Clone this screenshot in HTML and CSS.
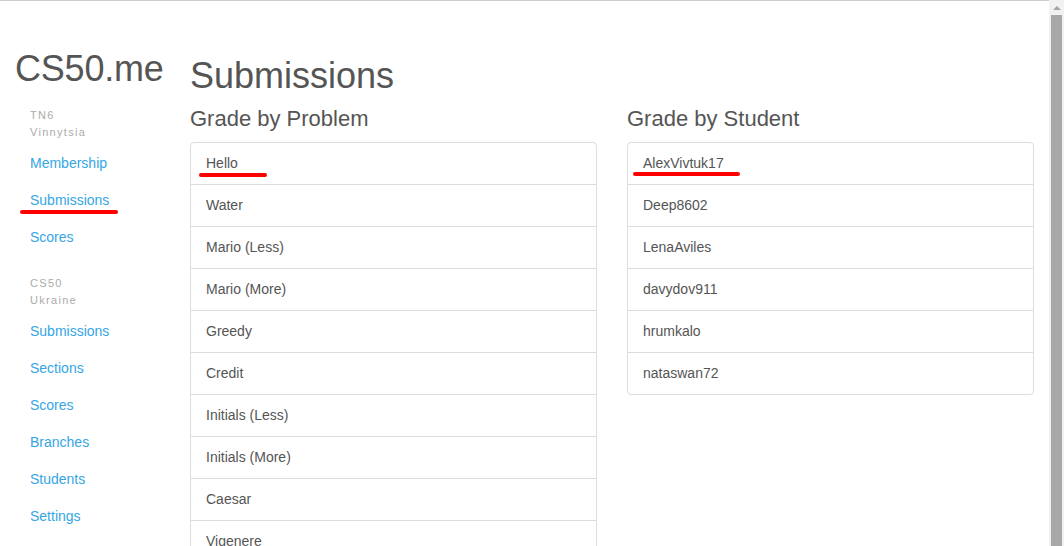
FILE: index.html
```html
<!DOCTYPE html>
<html lang="en">
<head>
<meta charset="utf-8">
<title>CS50.me - Submissions</title>
<link rel="stylesheet" href="styles.css">
</head>
<body>
<div class="window">
  <div class="page">
    <aside class="sidebar">
      <div class="brand">CS50.me</div>
      <div class="group">
        <div class="group-title">TN6<br>Vinnytsia</div>
        <nav class="nav">
          <a class="nav-link" href="#">Membership</a>
          <a class="nav-link marked" href="#">Submissions</a>
          <a class="nav-link" href="#">Scores</a>
        </nav>
      </div>
      <div class="group">
        <div class="group-title">CS50<br>Ukraine</div>
        <nav class="nav">
          <a class="nav-link" href="#">Submissions</a>
          <a class="nav-link" href="#">Sections</a>
          <a class="nav-link" href="#">Scores</a>
          <a class="nav-link" href="#">Branches</a>
          <a class="nav-link" href="#">Students</a>
          <a class="nav-link" href="#">Settings</a>
        </nav>
      </div>
    </aside>
    <main class="main">
      <h1 class="title">Submissions</h1>
      <div class="columns">
        <section class="col">
          <h3 class="subtitle">Grade by Problem</h3>
          <ul class="list">
            <li class="item mark-hello">Hello</li>
            <li class="item">Water</li>
            <li class="item">Mario (Less)</li>
            <li class="item">Mario (More)</li>
            <li class="item">Greedy</li>
            <li class="item">Credit</li>
            <li class="item">Initials (Less)</li>
            <li class="item">Initials (More)</li>
            <li class="item">Caesar</li>
            <li class="item">Vigenere</li>
          </ul>
        </section>
        <section class="col">
          <h3 class="subtitle">Grade by Student</h3>
          <ul class="list">
            <li class="item mark-alex">AlexVivtuk17</li>
            <li class="item">Deep8602</li>
            <li class="item">LenaAviles</li>
            <li class="item">davydov911</li>
            <li class="item">hrumkalo</li>
            <li class="item">nataswan72</li>
          </ul>
        </section>
      </div>
    </main>
  </div>
  <div class="scrollbar">
    <div class="scroll-arrow"></div>
    <div class="scroll-thumb"></div>
  </div>
</div>
</body>
</html>
```

FILE: styles.css
```css
* { box-sizing: border-box; }

html, body {
  margin: 0;
  padding: 0;
  background: #fff;
}

body {
  font-family: "Liberation Sans", Arial, Helvetica, sans-serif;
  font-size: 14px;
  line-height: 20px;
  color: #555;
}

.window {
  display: flex;
  width: 1064px;
  height: 546px;
  overflow: hidden;
}

.page {
  flex: 1;
  display: flex;
  border-top: 1px solid #cdcdcd;
  padding-left: 15px;
  padding-right: 15px;
  min-width: 0;
}

/* Sidebar */
.sidebar {
  width: 175px;
  flex: none;
  padding-top: 48px;
}

.brand {
  font-size: 36px;
  line-height: 40px;
  color: #555;
  letter-spacing: -0.2px;
}

.group {
  padding-left: 15px;
}

.group-title {
  font-size: 11px;
  line-height: 17px;
  letter-spacing: 1.3px;
  color: #ababab;
  margin-top: 18px;
  margin-bottom: 4px;
}

.group + .group .group-title {
  margin-top: 19px;
}

.nav {
  display: flex;
  flex-direction: column;
}

.nav-link {
  display: block;
  position: relative;
  color: #35a6e4;
  text-decoration: none;
  line-height: 20px;
  padding: 8px 0 9px;
  align-self: flex-start;
}

.marked::after {
  content: "";
  position: absolute;
  left: -10px;
  top: 28px;
  width: 98px;
  height: 4px;
  border-radius: 2px;
  background: #ff0000;
}

/* Main */
.main {
  flex: 1;
  padding-top: 55px;
  min-width: 0;
}

.title {
  margin: 0;
  font-size: 36px;
  line-height: 40px;
  font-weight: normal;
  color: #555;
}

.columns {
  display: flex;
  gap: 30px;
}

.col {
  flex: 1;
  min-width: 0;
}

.subtitle {
  margin: 10px 0 10px;
  font-size: 22px;
  line-height: 26px;
  font-weight: normal;
  color: #555;
}

.list {
  list-style: none;
  margin: 0;
  padding: 0;
  border: 1px solid #ddd;
  border-radius: 4px;
}

.item {
  position: relative;
  padding: 10px 15px;
  line-height: 21px;
  color: #555;
}

.item + .item {
  border-top: 1px solid #ddd;
}

.mark-hello::after,
.mark-alex::after {
  content: "";
  position: absolute;
  height: 4px;
  border-radius: 2px;
  background: #ff0000;
}

.mark-hello::after {
  left: 8px;
  top: 30px;
  width: 68px;
}

.mark-alex::after {
  left: 5px;
  top: 29px;
  width: 107px;
}

/* Scrollbar */
.scrollbar {
  width: 15px;
  flex: none;
  background: #f1f1f1;
  display: flex;
  flex-direction: column;
  align-items: center;
}

.scroll-arrow {
  margin-top: 6px;
  width: 0;
  height: 0;
  border-left: 4px solid transparent;
  border-right: 4px solid transparent;
  border-bottom: 4px solid #a3a3a3;
}

.scroll-thumb {
  margin-top: 5px;
  width: 11px;
  flex: 1;
  background: #a8a8a8;
}
```
